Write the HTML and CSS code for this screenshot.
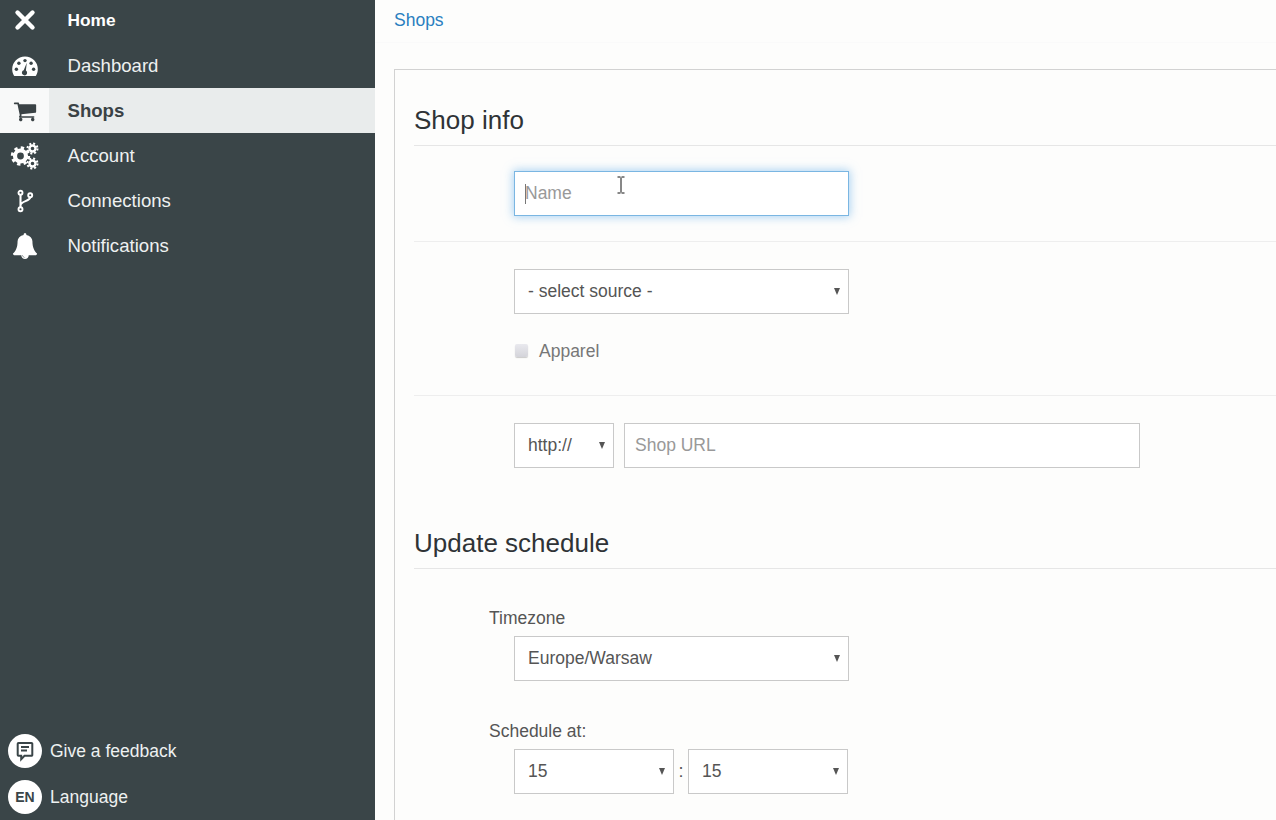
FILE: index.html
```html
<!DOCTYPE html>
<html lang="en">
<head>
<meta charset="utf-8">
<title>Shops</title>
<link rel="stylesheet" href="styles.css">
</head>
<body>
<aside class="sidebar">
  <nav class="nav">
    <a class="nav-item nav-home">
      <span class="nav-icon"><svg width="24" height="24" viewBox="0 0 24 24"><path d="M4.500 4.500 19.500 19.500M19.500 4.500 4.500 19.500" stroke="#fff" stroke-width="4.400" stroke-linecap="round"/></svg></span>
      <span class="nav-label">Home</span>
    </a>
    <a class="nav-item">
      <span class="nav-icon"><svg width="28" height="24" viewBox="0 0 28 24"><path d="M14 2.500C6.800 2.500 1.200 8.200 1.200 15.300c0 2.300.6 4.400 1.700 6.200.3.400.6.500 1 .5h20.200c.4 0 .7-.1 1-.5 1.100-1.800 1.700-3.900 1.700-6.200C27.100 8.200 21.200 2.500 14 2.500z" fill="#fff"/><g fill="#3a4548"><circle cx="14" cy="6.600" r="1.700"/><circle cx="7.900" cy="9.200" r="1.700"/><circle cx="5.400" cy="15.200" r="1.700"/><circle cx="20.100" cy="9.200" r="1.700"/><circle cx="22.600" cy="15.200" r="1.700"/><path d="M15.800 8.800 14.900 16.600a2.600 2.600 0 1 1-2.200-.3z"/></g></svg></span>
      <span class="nav-label">Dashboard</span>
    </a>
    <a class="nav-item nav-active">
      <span class="nav-icon"><svg width="24" height="24" viewBox="0 0 1792 1792"><path fill="#3a4245" d="M704 1536q0 52-38 90t-90 38-90-38-38-90 38-90 90-38 90 38 38 90zm896 0q0 52-38 90t-90 38-90-38-38-90 38-90 90-38 90 38 38 90zm128-1088v512q0 24-16.500 42.500t-40.500 21.500l-1044 122q13 60 13 70 0 16-24 64h920q26 0 45 19t19 45-19 45-45 19h-1024q-26 0-45-19t-19-45q0-11 8-31.500t16-36 21.500-40 15.500-29.500l-177-823h-204q-26 0-45-19t-19-45 19-45 45-19h256q16 0 28.500 6.500t19.500 15.500 13 24.500 8 26 5.500 29.500 4.500 26h1201q26 0 45 19t19 45z"/></svg></span>
      <span class="nav-label">Shops</span>
    </a>
    <a class="nav-item">
      <span class="nav-icon"><svg width="30" height="28" viewBox="0 0 30 28" fill="none" stroke="#fff"><circle cx="10.500" cy="14" r="5.500" stroke-width="4.200"/><circle cx="10.500" cy="14" r="8.300" stroke-width="2.800" stroke-dasharray="3.300 3.220"/><circle cx="22.500" cy="6.500" r="3" stroke-width="2.400"/><circle cx="22.500" cy="6.500" r="5" stroke-width="2" stroke-dasharray="2 1.930"/><circle cx="22.500" cy="21.500" r="3" stroke-width="2.400"/><circle cx="22.500" cy="21.500" r="5" stroke-width="2" stroke-dasharray="2 1.930"/></svg></span>
      <span class="nav-label">Account</span>
    </a>
    <a class="nav-item">
      <span class="nav-icon"><svg width="20" height="24" viewBox="0 0 20 24" fill="none" stroke="#fff" stroke-width="1.900"><circle cx="5.500" cy="3.800" r="2"/><circle cx="5.500" cy="20.200" r="2"/><circle cx="15.200" cy="6.300" r="2"/><path d="M5.500 5.800V18.200M15.200 8.300c0 4.200-9.700 3.500-9.700 8.200" stroke-width="2.100"/></svg></span>
      <span class="nav-label">Connections</span>
    </a>
    <a class="nav-item">
      <span class="nav-icon"><svg width="26" height="26" viewBox="0 0 1792 1792"><path fill="#fff" d="M912 1696q0-16-16-16-59 0-101.500-42.500t-42.500-101.500q0-16-16-16t-16 16q0 73 51.500 124.500t124.500 51.500q16 0 16-16zm816-288q0 52-38 90t-90 38h-448q0 106-75 181t-181 75-181-75-75-181h-448q-52 0-90-38t-38-90q50-42 91-88t85-119.500 74.500-158.500 50-206 19.500-260q0-152 117-282.500t307-158.500q-8-19-8-39 0-40 28-68t68-28 68 28 28 68q0 20-8 39 190 28 307 158.500t117 282.500q0 139 19.500 260t50 206 74.500 158.500 85 119.500 91 88z"/></svg></span>
      <span class="nav-label">Notifications</span>
    </a>
  </nav>
  <div class="side-foot">
    <a class="foot-item">
      <span class="foot-badge"><svg width="20" height="22" viewBox="0 0 20 22"><path d="M3.500 3H16.500a.8.8 0 0 1 .8.8V15a.8.8 0 0 1-.8.8H9.500L6.200 19.200V15.800H3.500a.8.8 0 0 1-.8-.8V3.800a.8.8 0 0 1 .8-.8z" fill="#fff" stroke="#3a4548" stroke-width="2"/><path d="M6 7H14M6 10.500H12" stroke="#3a4548" stroke-width="2"/></svg></span>
      <span>Give a feedback</span>
    </a>
    <a class="foot-item">
      <span class="foot-badge foot-lang">EN</span>
      <span>Language</span>
    </a>
  </div>
</aside>

<main class="main">
  <div class="crumbs"><a class="crumb">Shops</a></div>
  <section class="panel">
    <h2 class="panel-title">Shop info</h2>
    <div class="row row-name">
      <span class="focus-wrap"><input class="field field-focus" type="text" placeholder="Name"></span>
    </div>
    <div class="row row-source">
      <span class="select-wrap w-335"><select class="field select"><option>- select source -</option></select></span>
      <label class="check"><span class="check-box"></span>Apparel</label>
    </div>
    <div class="row row-url">
      <span class="select-wrap w-100"><select class="field select"><option>http://</option></select></span>
      <input class="field url" type="text" placeholder="Shop URL">
    </div>
    <h2 class="panel-title title-second">Update schedule</h2>
    <div class="labelled first-labelled">
      <div class="field-label">Timezone</div>
      <span class="select-wrap w-335 indent"><select class="field select"><option>Europe/Warsaw</option></select></span>
    </div>
    <div class="labelled second-labelled">
      <div class="field-label">Schedule at:</div>
      <div class="time indent">
        <span class="select-wrap w-160"><select class="field select"><option>15</option></select></span>
        <span class="colon">:</span>
        <span class="select-wrap w-160"><select class="field select"><option>15</option></select></span>
      </div>
    </div>
  </section>
  <svg class="ibeam" width="10" height="18" viewBox="0 0 10 18"><path d="M1.500 1H4.500M5.500 1H8.500M5 1.500V16.500M1.500 17H4.500M5.500 17H8.500" stroke="#111" stroke-width="1" fill="none"/></svg>
</main>
</body>
</html>
```
FILE: styles.css
```css
* { box-sizing: border-box; }
html, body { margin: 0; height: 100%; }
body {
  display: flex;
  height: 820px;
  overflow: hidden;
  background: #fdfdfc;
  font-family: "Liberation Sans", Arial, sans-serif;
  font-size: 18px;
  color: #555;
}
.sidebar {
  width: 375px;
  flex: none;
  display: flex;
  flex-direction: column;
  background: #3a4548;
  color: #eef1f1;
}
.nav { display: flex; flex-direction: column; }
.nav-item { display: flex; align-items: center; height: 45px; font-size: 18.600px; }
.nav-label { margin-left: 18.500px; padding-top: 1px; }
.nav-home { height: 43px; padding-bottom: 3px; color: #fff; font-weight: 700; font-size: 17.300px; }
.nav-home .nav-label { padding-top: 0; }
.nav-icon {
  width: 49px;
  height: 100%;
  flex: none;
  display: flex;
  align-items: center;
  justify-content: center;
}
.nav-active { background: #e9ecec; color: #3a4245; font-weight: 700; }
.nav-active .nav-icon { background: #f8f9f9; }
.side-foot { margin-top: auto; display: flex; flex-direction: column; }
.foot-item { display: flex; align-items: center; height: 46px; padding-left: 8px; gap: 8px; font-size: 17.500px; }
.foot-badge {
  width: 34px;
  height: 34px;
  border-radius: 50%;
  background: #fff;
  display: flex;
  align-items: center;
  justify-content: center;
  flex: none;
}
.foot-lang { color: #3a4548; font-weight: 700; font-size: 14px; }

.main { flex: 1; min-width: 0; position: relative; overflow: hidden; }
.crumbs { height: 43px; padding-left: 19px; display: flex; align-items: center; border-bottom: 1px solid #fafafa; }
.crumb { color: #2a7fc0; font-size: 17.500px; margin-top: -2px; }
.panel {
  margin: 26px -20px 0 19px;
  height: 800px;
  border: 1px solid #d2d2d2;
  padding: 0 0 0 19px;
}
.panel-title {
  margin: 0;
  height: 76px;
  padding-top: 33px;
  font-size: 26px;
  line-height: 34px;
  font-weight: 400;
  color: #2f3336;
  border-bottom: 1px solid #e6e6e6;
}
.title-second { height: 60px; padding-top: 17px; }
.row { padding-left: 100px; border-bottom: 1px solid #eeeeee; padding-top: 25px; }
.row-name { height: 96px; }
.row-source { height: 154px; padding-top: 27px; }
.row-url { height: 113px; padding-top: 27px; display: flex; gap: 10px; align-items: flex-start; border-bottom: 0; }
.field {
  height: 45px;
  border: 1px solid #c9c9c9;
  background: #fff;
  font: 17.500px "Liberation Sans", Arial, sans-serif;
  color: #555;
  padding: 0 10px;
  border-radius: 0;
  outline: 0;
  display: block;
}
.field::placeholder { color: #999; opacity: 1; }
.focus-wrap { display: block; width: 335px; position: relative; }
.focus-wrap::before {
  content: "";
  position: absolute;
  left: 11px;
  top: 13px;
  width: 1px;
  height: 20px;
  background: #777;
}
.field-focus {
  width: 100%;
  border-color: #7ab6e2;
  box-shadow: 0 0 9px 1px rgba(102, 175, 233, .55);
}
.url { width: 516px; }
.select-wrap { display: block; position: relative; flex: none; }
.select-wrap::after {
  content: "";
  position: absolute;
  right: 9px;
  top: 19px;
  border-left: 3.500px solid transparent;
  border-right: 3.500px solid transparent;
  border-top: 7px solid #555;
  pointer-events: none;
}
.select {
  width: 100%;
  appearance: none;
  -webkit-appearance: none;
  padding: 0 13px 2px;
}
.w-335 { width: 335px; }
.w-100 { width: 100px; }
.w-160 { width: 160px; }
.check { display: flex; align-items: center; margin-top: 27px; padding-left: 1px; font-size: 17.500px; color: #777; }
.check-box {
  width: 13px;
  height: 13px;
  margin: 0 11px 2px 0;
  border-radius: 2px;
  background: linear-gradient(#e9e9ee, #d4d4da);
  box-shadow: 0 1px 1px rgba(0,0,0,.2);
}
.labelled { padding-left: 75px; }
.first-labelled { margin-top: 40px; }
.second-labelled { margin-top: 41px; }
.field-label { height: 18px; line-height: 18px; margin-bottom: 9px; font-size: 17.500px; color: #555; }
.indent { margin-left: 25px; }
.time { display: flex; align-items: center; }
.colon { width: 14px; text-align: center; }
.ibeam { position: absolute; left: 241px; top: 176px; }
```
